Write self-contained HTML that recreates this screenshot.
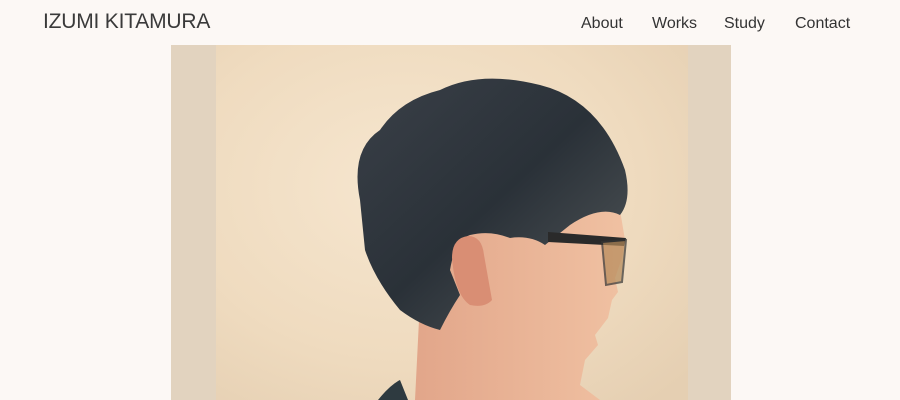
<!DOCTYPE html>
<html><head><style>
html,body{margin:0;padding:0;background:#fcf8f5;width:900px;height:400px;overflow:hidden;font-family:"Liberation Sans",sans-serif}
.logo{position:absolute;left:43px;top:10px;font-size:21px;color:#3a3a3a;letter-spacing:-0.2px}
.nav{position:absolute;top:15px;font-size:16px;color:#333}
</style></head><body>
<div class="logo">IZUMI KITAMURA</div>
<div class="nav" style="left:581px">About</div>
<div class="nav" style="left:652px">Works</div>
<div class="nav" style="left:724px">Study</div>
<div class="nav" style="left:795px">Contact</div>
<svg style="position:absolute;left:0;top:0" width="900" height="400">
<defs>
<radialGradient id="wall" cx="0.4" cy="0.4" r="0.8">
<stop offset="0" stop-color="#f6e6cf"/><stop offset="0.6" stop-color="#efdbbf"/><stop offset="1" stop-color="#e5cfb2"/></radialGradient>
<linearGradient id="hair" x1="0" y1="0" x2="1" y2="1">
<stop offset="0" stop-color="#3a4048"/><stop offset="0.5" stop-color="#2a3138"/><stop offset="1" stop-color="#555a5c"/></linearGradient>
<linearGradient id="skin" x1="0" y1="0" x2="1" y2="0">
<stop offset="0" stop-color="#e2a68a"/><stop offset="1" stop-color="#f0c1a2"/></linearGradient>
</defs>
<rect x="171" y="45" width="560" height="355" fill="#e2d3bf"/>
<rect x="216" y="45" width="472" height="355" fill="url(#wall)"/>
<path d="M420 300 L415 400 L600 400 L580 385 L585 360 L598 345 L595 335 L608 318 L612 300 L618 292 L615 278 L622 258 L625 240 L620 210 L560 200 L450 230 Z" fill="url(#skin)"/>
<path d="M378 400 Q390 385 400 380 L408 400 Z" fill="#2e3a40"/>
<path d="M360 200 Q350 150 380 130 Q400 100 440 90 Q480 70 540 85 Q600 100 625 170 Q632 200 620 215 Q600 205 570 225 L545 245 Q530 235 510 238 Q490 230 470 235 Q455 240 450 270 L460 295 Q450 310 440 330 Q420 325 400 310 Q375 280 365 250 Z" fill="url(#hair)"/>
<path d="M452 258 Q452 238 468 236 Q482 236 484 255 L492 300 Q485 308 470 305 Q455 295 452 258 Z" fill="#d98e74"/>
<path d="M548 232 L626 238 L624 246 L548 242 Z" fill="#2a2a2a"/>
<path d="M602 242 L626 240 L622 282 L606 285 Z" fill="#b58a5a" opacity="0.7" stroke="#333" stroke-width="2"/>
</svg>
</body></html>
